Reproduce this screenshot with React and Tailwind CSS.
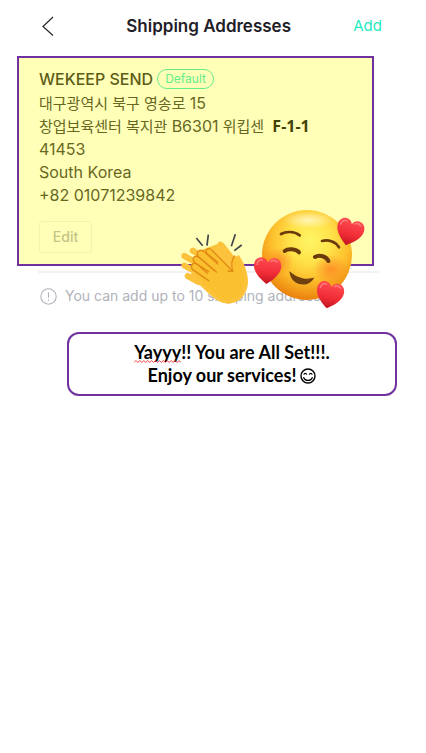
import React from 'react';

const address = {
  name: 'WEKEEP SEND',
  street: '대구광역시 북구 영송로',
  streetNumber: '15',
  building: '창업보육센터 복지관',
  room: 'B6301',
  company: '위킵센',
  unit: 'F-1-1',
  zip: '41453',
  country: 'South Korea',
  phone: '+82 01071239842'
};

const Heart = ({ x, y, rotate }) => (
  <g transform={`translate(${x} ${y}) rotate(${rotate})`}>
    <path
      d="M0 41C-14 31-41 11-41-13C-41-29-31-38-20-38C-9-38-3-32 0-24C3-32 9-38 20-38C31-38 41-29 41-13C41 11 14 31 0 41Z"
      fill="url(#heart)"
    />
    <path d="M-32-16C-31-26-25-31-17-30" fill="none" stroke="#ff9a9a" strokeWidth="5" strokeLinecap="round" opacity=".6" />
    <path d="M9-28C14-32 22-31 27-27" fill="none" stroke="#ff9a9a" strokeWidth="5" strokeLinecap="round" opacity=".6" />
  </g>
);

const LoveFace = ({ className }) => (
  <svg className={className} viewBox="36 24 342 312" aria-hidden="true">
    <defs>
      <radialGradient id="face" cx="54%" cy="34%" r="66%">
        <stop offset="0" stopColor="#fff566" />
        <stop offset=".35" stopColor="#ffe34a" />
        <stop offset=".66" stopColor="#fdbf2c" />
        <stop offset="1" stopColor="#ea810c" />
      </radialGradient>
      <radialGradient id="blush">
        <stop offset="0" stopColor="#fb7a22" stopOpacity=".7" />
        <stop offset="1" stopColor="#fb7a22" stopOpacity="0" />
      </radialGradient>
      <radialGradient id="shine">
        <stop offset="0" stopColor="#fff" stopOpacity=".6" />
        <stop offset="1" stopColor="#fff" stopOpacity="0" />
      </radialGradient>
      <linearGradient id="heart" x1="0" y1="0" x2="0" y2="1">
        <stop offset="0" stopColor="#ff4c50" />
        <stop offset=".6" stopColor="#f02c36" />
        <stop offset="1" stopColor="#c01420" />
      </linearGradient>
    </defs>
    <circle cx="201" cy="165" r="135" fill="url(#face)" />
    <ellipse cx="205" cy="60" rx="80" ry="26" fill="url(#shine)" />
    <ellipse cx="112" cy="186" rx="48" ry="42" fill="url(#blush)" />
    <ellipse cx="272" cy="208" rx="52" ry="44" fill="url(#blush)" />
    <g fill="none" stroke="#6b3a0c" strokeLinecap="round">
      <path d="M123 102C138 94 162 93 179 106" strokeWidth="8" />
      <path d="M246 123C264 118 286 124 297 142" strokeWidth="8" />
      <path d="M134 153C144 145 168 146 177 157" strokeWidth="12" />
      <path d="M225 171C238 163 260 169 265 183" strokeWidth="12" />
    </g>
    <path d="M148 213C151 247 178 258 202 252C214 247 221 239 223 232C201 242 170 234 148 213Z" fill="#71400f" />
    <Heart x={329} y={96} rotate={16} />
    <Heart x={82} y={211} rotate={4} />
    <Heart x={269} y={285} rotate={12} />
  </svg>
);

const Clap = ({ className }) => (
  <svg className={className} viewBox="30 96 210 222" aria-hidden="true">
    {/* Back hand */}
    <g fill="none" stroke="#fcc23b" strokeWidth="18" strokeLinecap="round">
      <path d="M68 152L105 174" />
      <path d="M43 168L90 194" />
      <path d="M43 197L80 216" />
      <path d="M53 228L86 246" />
    </g>
    <path
      d="M142 132C146 121 157 124 163 132L194 171L207 165C216 178 235 214 234 246C233 280 210 310 175 311C151 311 132 296 115 280L62 229L75 175L100 148Z"
      fill="#fcc23b"
    />
    {/* Front hand */}
    <path
      d="M188 214L126 151C117 141 104 149 109 158C98 146 81 151 80 165C70 172 67 181 74 190C61 190 58 202 65 209L120 270C150 302 184 308 207 287C231 262 224 218 202 174C192 166 187 177 189 195Z"
      fill="#fbc02f"
    />
    <g fill="none" stroke="#e18a14" strokeWidth="4" strokeLinecap="round" strokeLinejoin="round">
      <path d="M143 186L110 160C103 148 117 141 126 151L188 214" />
      <path d="M139 216L86 171C74 157 91 144 104 156L143 192" />
      <path d="M116 215L77 190C62 176 73 163 87 172L134 212" />
      <path d="M116 242L68 209C59 196 69 184 82 193L112 220" />
      <path d="M188 214C184 198 185 178 194 168" />
      <path d="M188 214L174 213" />
    </g>
    <g fill="none" stroke="#41434a" strokeWidth="5">
      <path d="M79 114L98 137" />
      <path d="M115 104L111 137" />
      <path d="M196 103L184 139" />
      <path d="M215 135L193 152" />
    </g>
  </svg>
);

const Smiley = ({ className }) => (
  <svg className={className} viewBox="0 0 16 16" fill="none" stroke="#000" aria-hidden="true">
    <circle cx="8" cy="8" r="7" strokeWidth="1.4" />
    <path d="M3.8 6.7C4.2 4.9 6.3 4.9 6.7 6.7M9.3 6.7C9.7 4.9 11.8 4.9 12.2 6.7" strokeWidth="1.2" />
    <path d="M3.5 9.2C5 13.5 11 13.5 12.5 9.2" strokeWidth="1.3" />
  </svg>
);

const Squiggle = ({ className }) => (
  <svg className={className} viewBox="0 0 48 3" preserveAspectRatio="none" fill="none" stroke="#f04040" aria-hidden="true">
    <path d="M0 2.5L2 .5L4 2.5L6 .5L8 2.5L10 .5L12 2.5L14 .5L16 2.5L18 .5L20 2.5L22 .5L24 2.5L26 .5L28 2.5L30 .5L32 2.5L34 .5L36 2.5L38 .5L40 2.5L42 .5L44 2.5L46 .5L48 2.5" />
  </svg>
);

const App = () => {
  return (
    <div className="min-h-screen bg-white font-['Inter','Noto_Sans_CJK_KR',sans-serif]">
      {/* Header */}
      <header className="flex h-14 items-center justify-between pl-10 pr-11 pb-1">
        <button type="button" aria-label="Back" className="w-6">
          <svg className="h-5 w-3 ml-0.5" viewBox="0 0 12 20" fill="none" stroke="#25272c" strokeWidth="1.2">
            <path d="M11 1L1 10.5L11 19.5" />
          </svg>
        </button>
        <h1 className="text-[17px] leading-6 font-semibold text-[#1f2027]">Shipping Addresses</h1>
        <button type="button" className="text-[15px] leading-6 text-[#1feac0]">Add</button>
      </header>

      <main className="relative">
        {/* Default address */}
        <section className="ml-[17px] mr-[52px] border-2 border-[#7030a0] bg-[#ffffb8] pt-2.5 pb-[11px] pl-5 pr-4 text-[#67671f]">
          <div className="flex h-[22px] items-center gap-1">
            <h2 className="text-base leading-[22px] font-medium text-[#5c5c16]">{address.name}</h2>
            <span className="h-5 rounded-full border border-[#63ee8c] px-[7px] text-xs leading-[18px] text-[#63ee8c]">
              Default
            </span>
          </div>
          <address className="mt-0.5 text-base leading-[23px] not-italic">
            <p>
              <span className="text-[15px]">{address.street} </span>
              {address.streetNumber}
            </p>
            <p>
              <span className="text-[15px]">{address.building} </span>
              {address.room}
              <span className="text-[15px]"> {address.company} </span>
              <strong className="ml-1 font-['Noto_Sans',sans-serif] font-bold text-[#424208]">{address.unit}</strong>
            </p>
            <p>{address.zip}</p>
            <p>{address.country}</p>
            <p>{address.phone}</p>
          </address>
          <button
            type="button"
            className="mt-3.5 h-8 w-[53px] rounded-[3px] border border-[#f3f3a9] text-sm font-medium text-[#c4c487]"
          >
            Edit
          </button>
        </section>

        <hr className="mt-[5px] ml-[38px] mr-[47px] border-t-2 border-[#f2f2f4]" />

        <div className="mt-[11px] ml-10 flex h-6 items-center gap-2 text-sm text-[#afb2ba]">
          <svg className="h-[17px] w-[17px] shrink-0" viewBox="0 0 17 17" fill="none" stroke="currentColor" strokeWidth="1.1">
            <circle cx="8.5" cy="8.5" r="7.7" />
            <path d="M8.5 4.3V9.8M8.5 11.3V12.7" />
          </svg>
          <p>You can add up to 10 shipping addresses</p>
        </div>

        {/* Reactions over the card */}
        <Clap className="absolute top-[176px] left-[180px] h-[74px] w-[70px]" />
        <LoveFace className="absolute top-[152px] left-[252px] h-[104px] w-[114px]" />

        <div className="mt-6 ml-[67px] mr-[29px] rounded-xl border-2 border-[#7030a0] bg-white py-[7px] text-center font-['Lato',sans-serif] text-lg leading-[23px] font-bold text-black">
          <p>
            <span className="relative">
              Yayyy
              <Squiggle className="absolute bottom-0 left-0 h-[3px] w-full" />
            </span>
            !! You are All Set!!!.
          </p>
          <p className="flex items-center justify-center gap-1">
            Enjoy our services!
            <Smiley className="h-4 w-4" />
          </p>
        </div>
      </main>
    </div>
  );
};

export default App;
